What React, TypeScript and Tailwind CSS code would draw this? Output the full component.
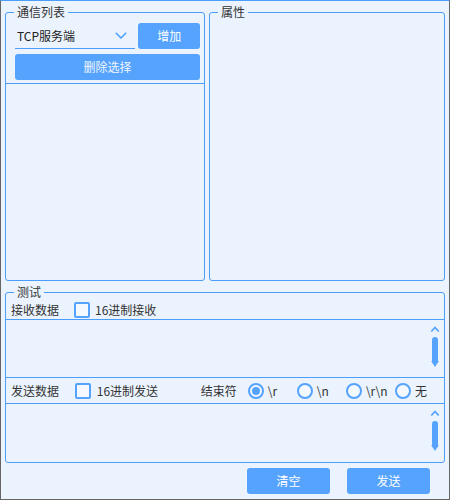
const BLUE = "border-[#4b9efa]"

function ScrollMark() {
  return (
    <svg width="10" height="44" viewBox="0 0 10 44" className="block">
      <polyline points="1.3,6.5 5,2.5 8.7,6.5" fill="none" stroke="#55a3fd" strokeWidth="1.8" />
      <rect x="2" y="12" width="6" height="27" rx="3" fill="#55a3fd" />
      <polygon points="1.2,36 8.8,36 5,42" fill="#55a3fd" />
    </svg>
  )
}

function CheckBox() {
  return <span className="w-[16px] h-[16px] shrink-0 border-2 border-[#55a3fd] rounded-[2px] bg-[#f4f8ff]" />
}

function Radio({ checked, label }: { checked?: boolean; label: string }) {
  return (
    <div className="w-[50px] flex items-center gap-[4px]">
      <span className="w-[16px] h-[16px] shrink-0 rounded-full border-2 border-[#55a3fd] bg-[#f4f8ff] flex items-center justify-center">
        {checked && <span className="w-[8px] h-[8px] rounded-full bg-[#55a3fd]" />}
      </span>
      <span>{label}</span>
    </div>
  )
}

export default function App() {
  return (
    <div
      className="w-[450px] h-[500px] bg-[#ebf3fe] border-t border-t-[#4b9efa] border-x border-b border-x-[#666] border-b-[#666] flex flex-col text-[12px] text-[#333]"
      style={{ fontFamily: '"Noto Sans CJK SC", "Noto Sans", sans-serif' }}
    >
      <div className="flex gap-[4px] px-[4px] pt-[3px]">
        {/* 通信列表 */}
        <fieldset className={`w-[200px] h-[277px] m-0 p-0 min-w-0 border ${BLUE} rounded-[3px] flex flex-col`}>
          <legend className="ml-[8px] px-[3px] leading-[16px]">通信列表</legend>
          <div className="flex gap-[3px] pl-[9px] pr-[4px] pt-[3px]">
            <div className="w-[121px] h-[26px] border-b border-[#4b9efa] flex items-center justify-between pl-[2px] pr-[8px]">
              <span className="text-[#222]">TCP服务端</span>
              <svg width="12" height="7" viewBox="0 0 12 7">
                <polyline points="0.8,0.8 6,6 11.2,0.8" fill="none" stroke="#4b9efa" strokeWidth="1.5" />
              </svg>
            </div>
            <button className="w-[62px] h-[26px] rounded-[3px] bg-[#55a3fd] text-white">增加</button>
          </div>
          <div className="pl-[9px] pr-[4px] pt-[5px]">
            <button className="w-full h-[26px] rounded-[3px] bg-[#55a3fd] text-[#f0f6ff]">删除选择</button>
          </div>
          <div className={`mt-[3px] flex-1 border-t ${BLUE}`} />
        </fieldset>

        {/* 属性 */}
        <fieldset className={`flex-1 h-[277px] m-0 p-0 min-w-0 border ${BLUE} rounded-[3px]`}>
          <legend className="ml-[8px] px-[3px] leading-[16px]">属性</legend>
        </fieldset>
      </div>

      {/* 测试 */}
      <div className="px-[4px] mt-[3px]">
        <fieldset className={`h-[179px] m-0 p-0 min-w-0 border ${BLUE} rounded-[3px] flex flex-col`}>
          <legend className="ml-[8px] px-[3px] leading-[16px]">测试</legend>
          <div className="h-[19px] flex items-center pl-[5px]">
            <span className="w-[63px]">接收数据</span>
            <CheckBox />
            <span className="ml-[5px]">16进制接收</span>
          </div>
          <div className={`h-[59px] border-y ${BLUE} flex justify-end pr-[4px] pt-[5px]`}>
            <ScrollMark />
          </div>
          <div className="h-[25px] flex items-center pl-[5px]">
            <span className="w-[65px]">发送数据</span>
            <CheckBox />
            <span className="ml-[6px] w-[106px]">16进制发送</span>
            <span className="w-[48px]">结束符</span>
            <Radio checked label="\r" />
            <Radio label="\n" />
            <Radio label="\r\n" />
            <Radio label="无" />
          </div>
          <div className={`flex-1 border-t ${BLUE} flex justify-end pr-[4px] pt-[5px]`}>
            <ScrollMark />
          </div>
        </fieldset>
      </div>

      <div className="flex justify-end gap-[17px] pr-[19px] mt-[5px]">
        <button className="w-[83px] h-[26px] rounded-[3px] bg-[#55a3fd] text-white">清空</button>
        <button className="w-[83px] h-[26px] rounded-[3px] bg-[#55a3fd] text-white">发送</button>
      </div>
    </div>
  )
}
